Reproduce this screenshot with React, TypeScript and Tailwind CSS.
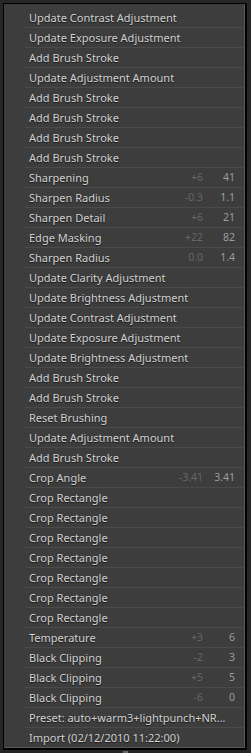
import React from "react";

type Row = { name: string; a?: string; b?: string };

const rows: Row[] = [
  { name: "Update Contrast Adjustment" },
  { name: "Update Exposure Adjustment" },
  { name: "Add Brush Stroke" },
  { name: "Update Adjustment Amount" },
  { name: "Add Brush Stroke" },
  { name: "Add Brush Stroke" },
  { name: "Add Brush Stroke" },
  { name: "Add Brush Stroke" },
  { name: "Sharpening", a: "+6", b: "41" },
  { name: "Sharpen Radius", a: "-0.3", b: "1.1" },
  { name: "Sharpen Detail", a: "+6", b: "21" },
  { name: "Edge Masking", a: "+22", b: "82" },
  { name: "Sharpen Radius", a: "0.0", b: "1.4" },
  { name: "Update Clarity Adjustment" },
  { name: "Update Brightness Adjustment" },
  { name: "Update Contrast Adjustment" },
  { name: "Update Exposure Adjustment" },
  { name: "Update Brightness Adjustment" },
  { name: "Add Brush Stroke" },
  { name: "Add Brush Stroke" },
  { name: "Reset Brushing" },
  { name: "Update Adjustment Amount" },
  { name: "Add Brush Stroke" },
  { name: "Crop Angle", a: "-3.41", b: "3.41" },
  { name: "Crop Rectangle" },
  { name: "Crop Rectangle" },
  { name: "Crop Rectangle" },
  { name: "Crop Rectangle" },
  { name: "Crop Rectangle" },
  { name: "Crop Rectangle" },
  { name: "Crop Rectangle" },
  { name: "Temperature", a: "+3", b: "6" },
  { name: "Black Clipping", a: "-2", b: "3" },
  { name: "Black Clipping", a: "+5", b: "5" },
  { name: "Black Clipping", a: "-6", b: "0" },
  { name: "Preset: auto+warm3+lightpunch+NR..." },
  { name: "Import (02/12/2010 11:22:00)" },
];

export default function App() {
  return (
    <div
      className="w-[251px] h-[753px] bg-[#262626] pt-[3px] pl-[3px] pr-[4px] pb-[3px] relative"
      style={{ fontFamily: '"Noto Sans", "Open Sans", sans-serif' }}
    >
      <div className="h-full border border-black border-r-2 border-b-2">
        <div className="h-full bg-[#3d3d3d] border-r border-b border-[#575757] pt-[4px] pl-[21px] overflow-hidden">
          {rows.map((r, i) => {
            const last = i === rows.length - 1;
            return (
              <div
                key={i}
                className={`flex items-center ${
                  last ? "h-[19px]" : "h-[20px] border-b border-[#4a4a4a]"
                }`}
              >
                <div
                  className="flex-1 pl-[4px] text-[11px] leading-[19px] text-[#d2d2d2] whitespace-nowrap overflow-hidden"
                  style={{ textShadow: "0 1px 1px rgba(0,0,0,0.6)" }}
                >
                  {r.name}
                </div>
                {r.a !== undefined && (
                  <>
                    <div className="w-[40px] text-right text-[10.5px] text-[#676767]">{r.a}</div>
                    <div className="w-[32px] text-right text-[10.5px] text-[#9c9c9c] pr-[9px] box-content">
                      {r.b}
                    </div>
                  </>
                )}
              </div>
            );
          })}
        </div>
      </div>
      <div className="absolute left-[123px] bottom-0 w-[5px] h-[2px] bg-[#6a6a6a]" />
    </div>
  );
}
